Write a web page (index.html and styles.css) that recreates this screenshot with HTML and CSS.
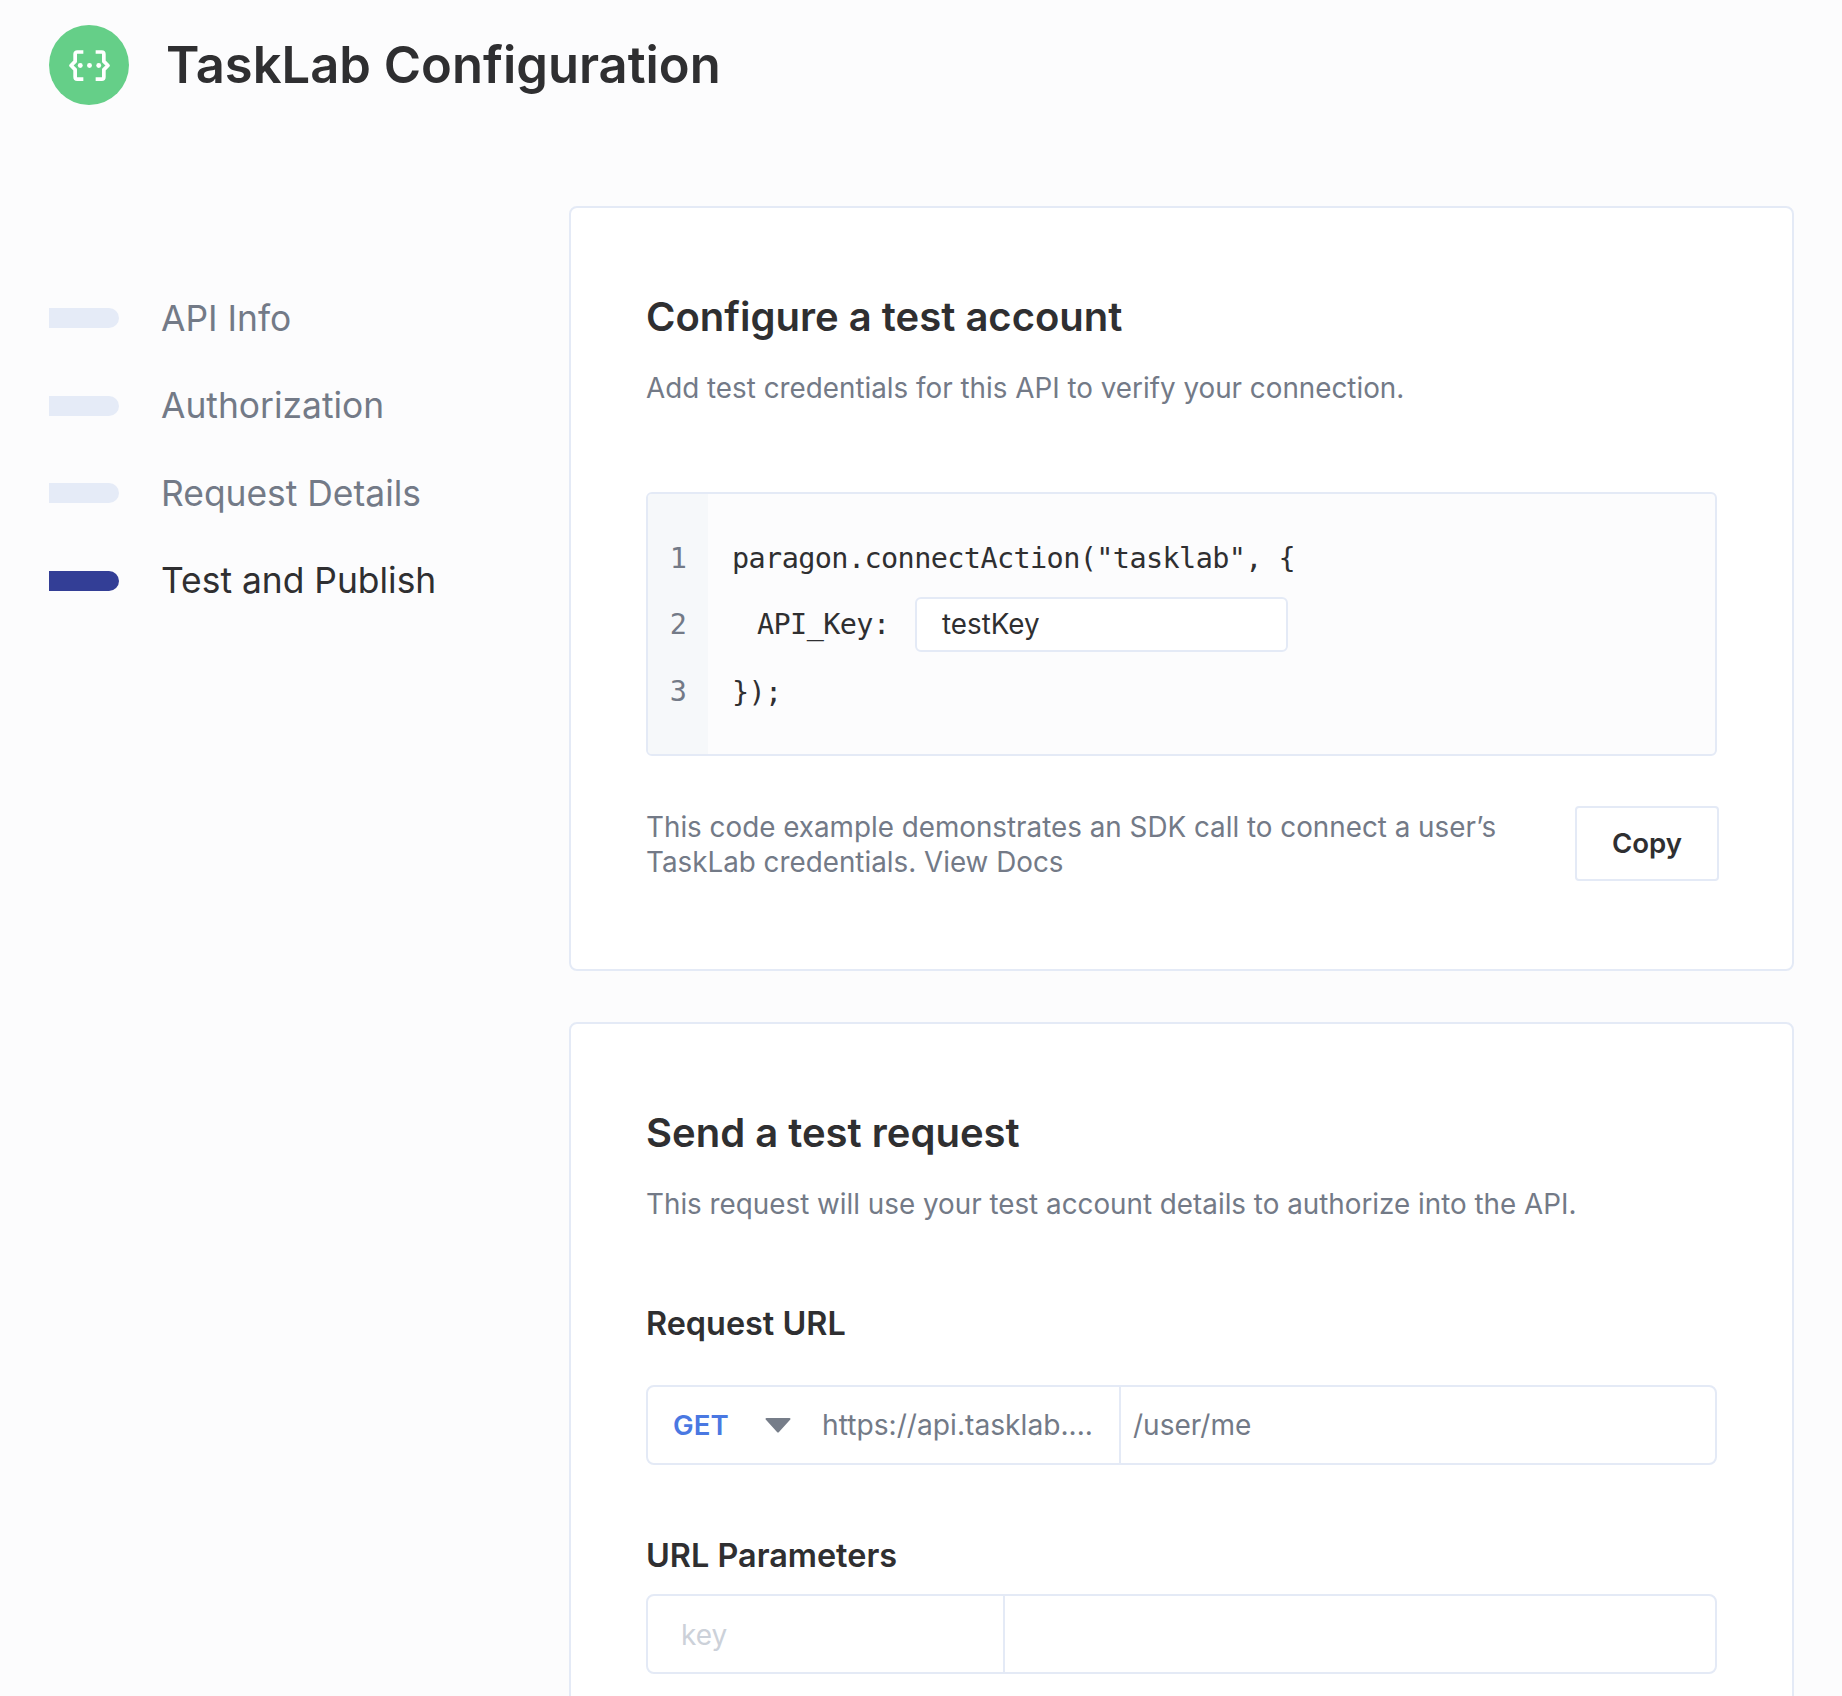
FILE: index.html
```html
<!DOCTYPE html>
<html lang="en">
<head>
<meta charset="utf-8">
<title>TaskLab Configuration</title>
<link rel="stylesheet" href="styles.css">
</head>
<body>
<header class="top">
  <div class="logo">
    <svg class="logo-icon" viewBox="0 0 40 30" fill="none" stroke="#fff" stroke-width="3.600" stroke-linejoin="round">
      <path d="M14 1.800H8a2 2 0 0 0-2 2V11L2 15l4 4v7.200a2 2 0 0 0 2 2h6"/>
      <path d="M26 1.800h6a2 2 0 0 1 2 2V11l4 4-4 4v7.200a2 2 0 0 1-2 2h-6"/>
      <g fill="#fff" stroke="none"><circle cx="11" cy="15" r="2.400"/><circle cx="20" cy="15" r="2.400"/><circle cx="29" cy="15" r="2.400"/></g>
    </svg>
  </div>
  <h1 class="title">TaskLab Configuration</h1>
</header>
<main class="layout">
  <nav class="steps">
    <div class="step"><span class="bar"></span><span class="step-label">API Info</span></div>
    <div class="step"><span class="bar"></span><span class="step-label">Authorization</span></div>
    <div class="step"><span class="bar"></span><span class="step-label">Request Details</span></div>
    <div class="step active"><span class="bar"></span><span class="step-label">Test and Publish</span></div>
  </nav>
  <div class="cards">
    <section class="card card-one">
      <h2 class="card-title">Configure a test account</h2>
      <p class="card-sub">Add test credentials for this API to verify your connection.</p>
      <div class="code">
        <div class="gutter"><span class="num">1</span><span class="num num-two">2</span><span class="num">3</span></div>
        <div class="lines">
          <div class="line">paragon.connectAction("tasklab", {</div>
          <div class="line line-input"><span class="key">API_Key:</span><span class="field">testKey</span></div>
          <div class="line">});</div>
        </div>
      </div>
      <div class="foot">
        <p class="foot-text">This code example demonstrates an SDK call to connect a user’s TaskLab credentials. View Docs</p>
        <button class="copy">Copy</button>
      </div>
    </section>
    <section class="card card-two">
      <h2 class="card-title">Send a test request</h2>
      <p class="card-sub">This request will use your test account details to authorize into the API.</p>
      <h3 class="label label-url">Request URL</h3>
      <div class="row row-url">
        <div class="url-base">
          <span class="method">GET</span>
          <svg class="caret" viewBox="0 0 26 16"><path d="M1.500 1h23a1 1 0 0 1 .8 1.600L14 15a1.300 1.300 0 0 1-2 0L.7 2.600A1 1 0 0 1 1.500 1z" fill="#767d89"/></svg>
          <span class="base-text">https://api.tasklab....</span>
        </div>
        <div class="url-path">/user/me</div>
      </div>
      <h3 class="label label-params">URL Parameters</h3>
      <div class="row row-params">
        <div class="param-key">key</div>
        <div class="param-value"></div>
      </div>
    </section>
  </div>
</main>
</body>
</html>
```
FILE: styles.css
```css
* { box-sizing: border-box; }
html, body { margin: 0; height: 1696px; overflow: hidden; }
body { background: #fcfcfd; font-family: "Inter", "Liberation Sans", sans-serif; color: #2f2f31; }
h1, h2, h3, p { margin: 0; }

.top { display: flex; align-items: center; gap: 37px; padding: 25px 49px 0; }
.logo { width: 80px; height: 80px; border-radius: 50%; background: #65cf88; display: flex; align-items: center; justify-content: center; flex: none; }
.logo-icon { width: 41px; height: 31px; }
.title { font-size: 50.700px; line-height: 60px; font-weight: 600; }

.layout { display: flex; margin-top: 101px; }
.steps { width: 569px; flex: none; padding: 90px 0 0 49px; display: flex; flex-direction: column; gap: 43.500px; }
.step { display: flex; align-items: center; gap: 42px; height: 44px; font-size: 35.400px; color: #737a87; }
.bar { width: 70px; height: 20px; background: #e5ebf7; border-radius: 0 10px 10px 0; flex: none; }
.step.active { color: #2f2f31; }
.step.active .bar { background: #333e96; }

.cards { width: 1225px; display: flex; flex-direction: column; gap: 51px; }
.card { background: #fff; border: 2px solid #e4eaf6; border-radius: 8px; padding: 85px 75px 0; }
.card-one { height: 765px; }
.card-two { height: 900px; }
.card-title { font-size: 40px; line-height: 48px; font-weight: 600; }
.card-sub { font-size: 27.800px; line-height: 36px; color: #737a87; margin-top: 29px; }

.code { display: flex; height: 264px; margin-top: 86px; background: #fcfcfd; border: 2px solid #e4eaf6; border-radius: 6px; overflow: hidden; font-family: "DejaVu Sans Mono", monospace; font-size: 28.500px; letter-spacing: -0.6px; }
.gutter { width: 60px; background: #f6f8fa; padding-top: 31px; display: flex; flex-direction: column; align-items: center; color: #737a87; flex: none; }
.num { height: 67px; line-height: 67px; }
.num-two { height: 66px; line-height: 65px; }
.lines { padding: 31px 0 0 24px; flex: 1; }
.line { height: 67px; line-height: 67px; }
.line-input { display: flex; align-items: center; height: 65px; margin-bottom: 2px; padding-left: 25px; }
.key { width: 158px; flex: none; }
.field { width: 373px; height: 55px; background: #fff; border: 2px solid #e4eaf6; border-radius: 6px; padding-left: 25px; font-family: "Inter", sans-serif; font-size: 27.800px; letter-spacing: 0; line-height: 51px; }

.foot { display: flex; justify-content: space-between; align-items: flex-start; margin-top: 50px; width: 1073px; }
.foot-text { width: 880px; padding-top: 4px; font-size: 27.800px; line-height: 35px; color: #737a87; }
.copy { width: 144px; height: 75px; padding: 0 0 2px; background: #fff; border: 2px solid #e4eaf6; border-radius: 4px; font: 600 27.600px "Inter", sans-serif; color: #2f2f31; }

.label { font-size: 32.400px; line-height: 40px; font-weight: 600; }
.label-url { margin-top: 82px; }
.label-params { margin-top: 71px; }
.row { display: flex; height: 80px; border: 2px solid #e4eaf6; border-radius: 8px; font-size: 28px; color: #737a87; }
.row-url { margin-top: 41px; }
.row-params { margin-top: 18px; }
.url-base { width: 473px; flex: none; display: flex; align-items: center; padding-left: 25px; border-right: 2px solid #e4eaf6; }
.method { width: 92px; color: #4a78e2; font-size: 27.600px; font-weight: 600; flex: none; }
.caret { width: 26px; height: 16px; flex: none; }
.base-text { margin-left: 31px; font-size: 28.200px; white-space: nowrap; }
.url-path { padding-left: 12px; line-height: 76px; }
.param-key { width: 357px; flex: none; padding-left: 33px; line-height: 78px; color: #ccd1d9; border-right: 2px solid #e4eaf6; }
.param-value { flex: 1; }
```
